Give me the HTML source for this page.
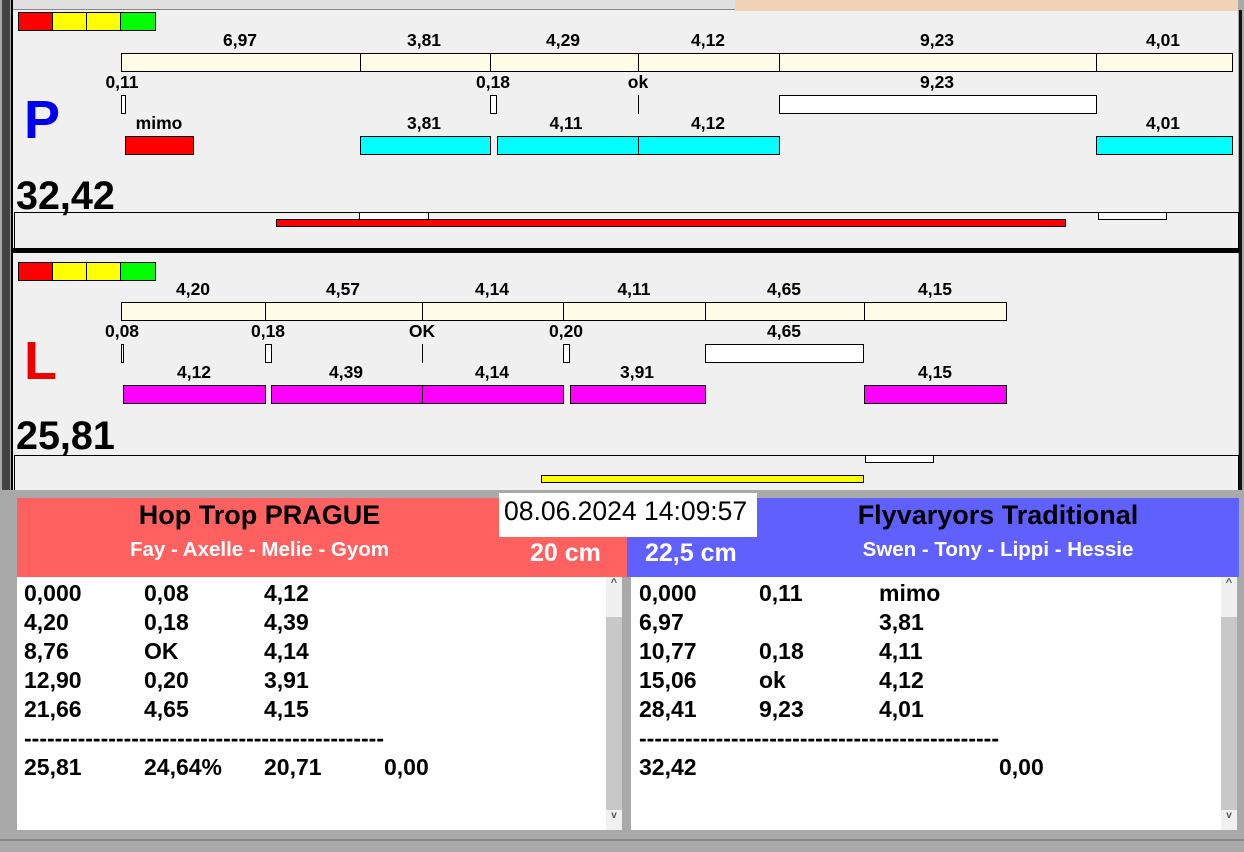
<!DOCTYPE html>
<html><head><meta charset="utf-8"><style>
*{margin:0;padding:0;box-sizing:border-box}
body{width:1244px;height:852px;overflow:hidden;background:#f0f0f0;position:relative;font-family:"Liberation Sans",Arial,sans-serif;font-weight:bold}
div{position:absolute}
.b{border:1px solid #000}
.cr{background:#fffde8}
.w{background:#fff}
.cy{background:#00ffff}
.mg{background:#ff00ff}
.t{font-size:17.5px;transform:translateX(-50%);white-space:nowrap;line-height:18px}
.r{font-size:23px;line-height:29px;white-space:nowrap}
</style></head><body>
<!-- frame -->
<div style="left:0;top:0;width:13px;height:852px;background:#a9a9a9"></div>
<div style="left:2px;top:0;width:8px;height:490px;background:#444"></div>
<div style="left:11px;top:0;width:2px;height:490px;background:#000"></div>
<div style="left:13px;top:0;width:722px;height:10px;background:#e0e0e0;border-bottom:1px solid #888"></div>
<div style="left:735px;top:0;width:505px;height:11px;background:#f0d2b4"></div>
<div style="left:1238px;top:0;width:6px;height:852px;background:#a9a9a9"></div>
<div style="left:1239px;top:10px;width:3px;height:480px;background:#111"></div>

<!-- P panel -->
<div class="b" style="left:18px;top:12px;width:35px;height:19px;background:#f00"></div>
<div class="b" style="left:52px;top:12px;width:35px;height:19px;background:#ff0"></div>
<div class="b" style="left:86px;top:12px;width:35px;height:19px;background:#ff0"></div>
<div class="b" style="left:120px;top:12px;width:36px;height:19px;background:#0f0"></div>

<div class="t" style="left:240px;top:31px">6,97</div>
<div class="t" style="left:424px;top:31px">3,81</div>
<div class="t" style="left:563px;top:31px">4,29</div>
<div class="t" style="left:708px;top:31px">4,12</div>
<div class="t" style="left:937px;top:31px">9,23</div>
<div class="t" style="left:1163px;top:31px">4,01</div>
<div class="b cr" style="left:121px;top:53px;width:240px;height:19px"></div>
<div class="b cr" style="left:360px;top:53px;width:131px;height:19px"></div>
<div class="b cr" style="left:490px;top:53px;width:149px;height:19px"></div>
<div class="b cr" style="left:638px;top:53px;width:142px;height:19px"></div>
<div class="b cr" style="left:779px;top:53px;width:318px;height:19px"></div>
<div class="b cr" style="left:1096px;top:53px;width:137px;height:19px"></div>

<div class="t" style="left:122px;top:73px">0,11</div>
<div class="t" style="left:493px;top:73px">0,18</div>
<div class="t" style="left:638px;top:73px">ok</div>
<div class="t" style="left:937px;top:73px">9,23</div>
<div class="b w" style="left:121px;top:95px;width:5px;height:19px"></div>
<div class="b w" style="left:490px;top:95px;width:7px;height:19px"></div>
<div style="left:638px;top:95px;width:1px;height:19px;background:#000"></div>
<div class="b w" style="left:779px;top:95px;width:318px;height:19px"></div>

<div class="t" style="left:159px;top:114px">mimo</div>
<div class="t" style="left:424px;top:114px">3,81</div>
<div class="t" style="left:566px;top:114px">4,11</div>
<div class="t" style="left:708px;top:114px">4,12</div>
<div class="t" style="left:1163px;top:114px">4,01</div>
<div class="b" style="left:125px;top:136px;width:69px;height:19px;background:#f00"></div>
<div class="b cy" style="left:360px;top:136px;width:131px;height:19px"></div>
<div class="b cy" style="left:497px;top:136px;width:142px;height:19px"></div>
<div class="b cy" style="left:638px;top:136px;width:142px;height:19px"></div>
<div class="b cy" style="left:1096px;top:136px;width:137px;height:19px"></div>

<div style="left:24px;top:88px;font-size:54px;color:#0000ee;line-height:64px">P</div>
<div style="left:16px;top:174px;font-size:39.5px;line-height:44px">32,42</div>
<div style="left:14px;top:212px;width:1225px;height:37px;border-top:1px solid #000;border-left:1px solid #000;border-right:1px solid #000"></div>
<div class="b w" style="left:359px;top:212px;width:70px;height:8px"></div>
<div class="b" style="left:276px;top:219px;width:790px;height:8px;background:#f00"></div>
<div class="b w" style="left:1098px;top:212px;width:69px;height:8px"></div>
<div style="left:13px;top:248px;width:1226px;height:5px;background:#000"></div>

<!-- L panel -->
<div class="b" style="left:18px;top:262px;width:35px;height:19px;background:#f00"></div>
<div class="b" style="left:52px;top:262px;width:35px;height:19px;background:#ff0"></div>
<div class="b" style="left:86px;top:262px;width:35px;height:19px;background:#ff0"></div>
<div class="b" style="left:120px;top:262px;width:36px;height:19px;background:#0f0"></div>

<div class="t" style="left:193px;top:280px">4,20</div>
<div class="t" style="left:343px;top:280px">4,57</div>
<div class="t" style="left:492px;top:280px">4,14</div>
<div class="t" style="left:634px;top:280px">4,11</div>
<div class="t" style="left:784px;top:280px">4,65</div>
<div class="t" style="left:935px;top:280px">4,15</div>
<div class="b cr" style="left:121px;top:302px;width:145px;height:19px"></div>
<div class="b cr" style="left:265px;top:302px;width:158px;height:19px"></div>
<div class="b cr" style="left:422px;top:302px;width:142px;height:19px"></div>
<div class="b cr" style="left:563px;top:302px;width:143px;height:19px"></div>
<div class="b cr" style="left:705px;top:302px;width:160px;height:19px"></div>
<div class="b cr" style="left:864px;top:302px;width:143px;height:19px"></div>

<div class="t" style="left:122px;top:322px">0,08</div>
<div class="t" style="left:268px;top:322px">0,18</div>
<div class="t" style="left:422px;top:322px">OK</div>
<div class="t" style="left:566px;top:322px">0,20</div>
<div class="t" style="left:784px;top:322px">4,65</div>
<div class="b w" style="left:121px;top:344px;width:3px;height:19px"></div>
<div class="b w" style="left:265px;top:344px;width:7px;height:19px"></div>
<div style="left:422px;top:344px;width:1px;height:19px;background:#000"></div>
<div class="b w" style="left:563px;top:344px;width:7px;height:19px"></div>
<div class="b w" style="left:705px;top:344px;width:159px;height:19px"></div>

<div class="t" style="left:194px;top:363px">4,12</div>
<div class="t" style="left:346px;top:363px">4,39</div>
<div class="t" style="left:492px;top:363px">4,14</div>
<div class="t" style="left:637px;top:363px">3,91</div>
<div class="t" style="left:935px;top:363px">4,15</div>
<div class="b mg" style="left:123px;top:385px;width:143px;height:19px"></div>
<div class="b mg" style="left:271px;top:385px;width:152px;height:19px"></div>
<div class="b mg" style="left:422px;top:385px;width:142px;height:19px"></div>
<div class="b mg" style="left:570px;top:385px;width:136px;height:19px"></div>
<div class="b mg" style="left:864px;top:385px;width:143px;height:19px"></div>

<div style="left:24px;top:331px;font-size:54px;color:#ee0000;line-height:60px">L</div>
<div style="left:16px;top:414px;font-size:39.5px;line-height:44px">25,81</div>
<div style="left:14px;top:455px;width:1225px;height:36px;border-top:1px solid #000;border-left:1px solid #000;border-right:1px solid #000"></div>
<div class="b w" style="left:865px;top:455px;width:69px;height:8px"></div>
<div class="b" style="left:541px;top:475px;width:323px;height:8px;background:#ff0"></div>

<!-- bottom -->
<div style="left:0;top:490px;width:1244px;height:362px;background:#a9a9a9"></div>
<div style="left:0;top:839px;width:1244px;height:2px;background:#888"></div>
<div style="left:17px;top:498px;width:610px;height:79px;background:#ff6060"></div>
<div style="left:627px;top:498px;width:612px;height:79px;background:#6060ff"></div>
<div style="left:17px;top:499px;width:485px;text-align:center;font-size:27px;line-height:32px">Hop Trop PRAGUE</div>
<div style="left:17px;top:538px;width:485px;text-align:center;font-size:20.5px;color:#fff;line-height:24px">Fay - Axelle - Melie - Gyom</div>
<div style="left:757px;top:499px;width:482px;text-align:center;font-size:27px;line-height:32px">Flyvaryors Traditional</div>
<div style="left:757px;top:538px;width:482px;text-align:center;font-size:20.5px;color:#fff;line-height:24px">Swen - Tony - Lippi - Hessie</div>
<div style="left:499px;top:493px;width:258px;height:44px;background:#fff;font-weight:normal;font-size:26.5px;line-height:36px;padding-left:5px;white-space:nowrap">08.06.2024 14:09:57</div>
<div style="left:530px;top:538px;font-size:25px;color:#fff;line-height:30px">20 cm</div>
<div style="left:645px;top:538px;font-size:25px;color:#fff;line-height:30px">22,5 cm</div>

<div style="left:17px;top:577px;width:589px;height:253px;background:#fff"></div>
<div style="left:606px;top:577px;width:16px;height:253px;background:#c8c8c8"></div>
<div style="left:606px;top:577px;width:16px;height:40px;background:#f0f0f0;font-size:11px;text-align:center;color:#555">^</div>
<div style="left:606px;top:810px;width:16px;height:20px;background:#f0f0f0;font-size:10px;text-align:center;color:#555">v</div>
<div style="left:631px;top:577px;width:590px;height:253px;background:#fff"></div>
<div style="left:1221px;top:577px;width:16px;height:253px;background:#c8c8c8"></div>
<div style="left:1221px;top:577px;width:16px;height:40px;background:#f0f0f0;font-size:11px;text-align:center;color:#555">^</div>
<div style="left:1221px;top:810px;width:16px;height:20px;background:#f0f0f0;font-size:10px;text-align:center;color:#555">v</div>

<div class="r" style="left:24px;top:579px">0,000<br>4,20<br>8,76<br>12,90<br>21,66<br>-----------------------------------------------<br>25,81</div>
<div class="r" style="left:144px;top:579px">0,08<br>0,18<br>OK<br>0,20<br>4,65<br><br>24,64%</div>
<div class="r" style="left:264px;top:579px">4,12<br>4,39<br>4,14<br>3,91<br>4,15<br><br>20,71</div>
<div class="r" style="left:384px;top:753px">0,00</div>

<div class="r" style="left:639px;top:579px">0,000<br>6,97<br>10,77<br>15,06<br>28,41<br>-----------------------------------------------<br>32,42</div>
<div class="r" style="left:759px;top:579px">0,11<br><br>0,18<br>ok<br>9,23</div>
<div class="r" style="left:879px;top:579px">mimo<br>3,81<br>4,11<br>4,12<br>4,01</div>
<div class="r" style="left:999px;top:753px">0,00</div>
</body></html>
